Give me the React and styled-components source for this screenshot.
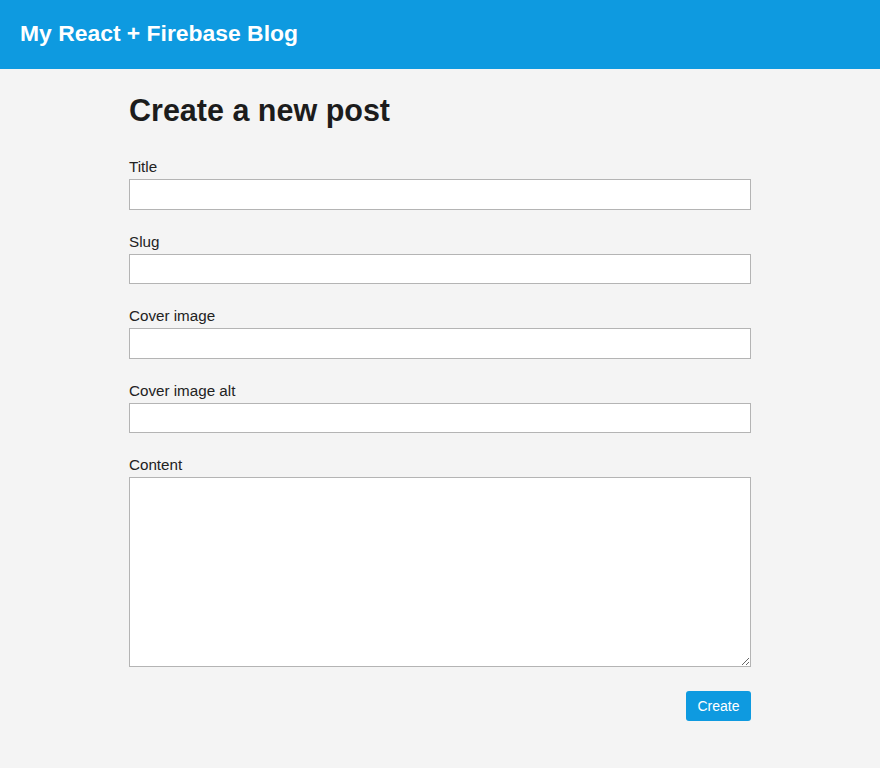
import React from 'react';
import styled, { createGlobalStyle } from 'styled-components';

const Color = {
    main: '#0e9ae0',
    background: '#f4f4f4',
    text: '#1c1c1c',
    border: '#b4b4b4',
    white: '#ffffff',
};

const GlobalStyle = createGlobalStyle`
    html, body {
        margin: 0;
        padding: 0;
        background: ${Color.background};
        font-family: "Liberation Sans", Arial, sans-serif;
        color: ${Color.text};
    }
    * {
        box-sizing: border-box;
    }
`;

const Header = styled.header`
    height: 69px;
    padding: 0 20px 2px;
    display: flex;
    align-items: center;
    background: ${Color.main};
    h1 {
        margin: 0;
        font-size: 22.9px;
        font-weight: 700;
        color: ${Color.white};
    }
`;

const Main = styled.main`
    width: 622px;
    margin: 0 auto;
    padding-bottom: 40px;
`;

const Title = styled.h2`
    margin: 23px 0 30px;
    font-size: 30.5px;
    line-height: 36px;
    font-weight: 700;
    color: ${Color.text};
`;

const Field = styled.div`
    margin-bottom: ${(props) => (props.$last ? '0' : '23px')};
    label {
        display: block;
        margin-bottom: 3px;
        font-size: 15.2px;
        line-height: 18px;
        color: #222;
    }
`;

const Input = styled.input`
    display: block;
    width: 100%;
    height: 30.5px;
    padding: 4px 6px;
    border: 1px solid ${Color.border};
    background: ${Color.white};
    font-family: inherit;
    font-size: 15px;
    outline: none;
`;

const TextArea = styled.textarea`
    display: block;
    width: 100%;
    height: 190px;
    padding: 4px 6px;
    border: 1px solid ${Color.border};
    background: ${Color.white};
    font-family: inherit;
    font-size: 15px;
    outline: none;
`;

const Actions = styled.div`
    margin-top: 24px;
    display: flex;
    justify-content: flex-end;
`;

const Button = styled.button`
    width: 65px;
    height: 30px;
    border: none;
    border-radius: 3px;
    background: ${Color.main};
    color: ${Color.white};
    font-family: inherit;
    font-size: 14px;
    cursor: pointer;
`;

const fields = [
    { id: 'title', label: 'Title' },
    { id: 'slug', label: 'Slug' },
    { id: 'coverImage', label: 'Cover image' },
    { id: 'coverImageAlt', label: 'Cover image alt' },
];

const App = () => {
    return (
        <>
            <GlobalStyle />
            <Header>
                <h1>My React + Firebase Blog</h1>
            </Header>
            <Main>
                <Title>Create a new post</Title>
                <form onSubmit={(e) => e.preventDefault()}>
                    {fields.map((field) => (
                        <Field key={field.id}>
                            <label htmlFor={field.id}>{field.label}</label>
                            <Input id={field.id} type="text" />
                        </Field>
                    ))}
                    <Field $last>
                        <label htmlFor="content">Content</label>
                        <TextArea id="content" />
                    </Field>
                    <Actions>
                        <Button type="submit">Create</Button>
                    </Actions>
                </form>
            </Main>
        </>
    );
};

export default App;
